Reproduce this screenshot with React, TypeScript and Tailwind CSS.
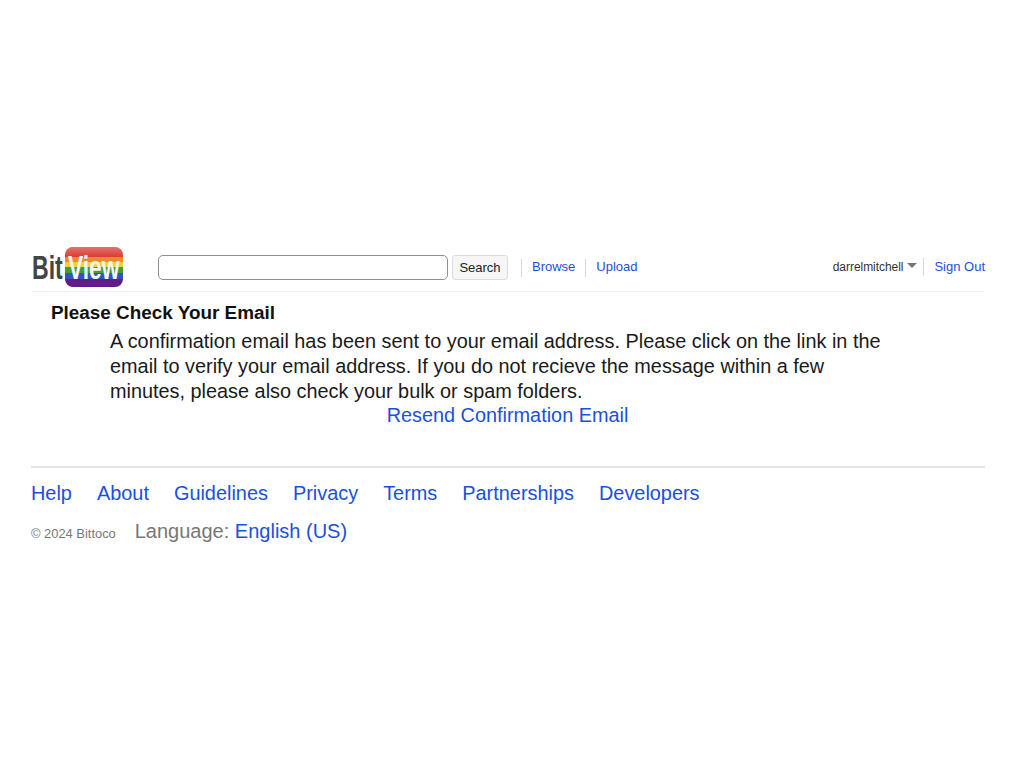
const font = { fontFamily: '"Liberation Sans", Arial, sans-serif' }

function Logo() {
  return (
    <svg width="93" height="42" viewBox="0 0 93 42" className="block shrink-0">
      <defs>
        <clipPath id="logo-clip">
          <rect x="34" y="1" width="58" height="40" rx="8" />
        </clipPath>
        <linearGradient id="logo-gloss" x1="0" y1="0" x2="0" y2="1">
          <stop offset="0" stopColor="#ffffff" stopOpacity="0.3" />
          <stop offset="1" stopColor="#ffffff" stopOpacity="0" />
        </linearGradient>
      </defs>
      <text transform="translate(1 33) scale(0.7 1)" fontFamily="Liberation Sans" fontWeight="700" fontSize="33" fill="#444444">Bit</text>
      <g clipPath="url(#logo-clip)">
        <rect x="34" y="1" width="58" height="10" fill="#d9362f" />
        <rect x="34" y="11" width="58" height="5" fill="#ee8a2c" />
        <rect x="34" y="16" width="58" height="5" fill="#f2d02f" />
        <rect x="34" y="21" width="58" height="6" fill="#3f9d3c" />
        <rect x="34" y="27" width="58" height="6" fill="#2f55b5" />
        <rect x="34" y="33" width="58" height="8" fill="#621b8c" />
        <rect x="34" y="1" width="58" height="11" fill="url(#logo-gloss)" />
      </g>
      <text transform="translate(37 33) scale(0.69 1)" fontFamily="Liberation Sans" fontWeight="700" fontSize="33" fill="#f4f4f4">View</text>
    </svg>
  )
}

const FOOTER_LINKS = ['Help', 'About', 'Guidelines', 'Privacy', 'Terms', 'Partnerships', 'Developers']

export default function App() {
  return (
    <div className="w-[1020px] h-[765px] bg-white pt-[246px] pl-[31px] pr-[35px]" style={font}>
      {/* Header */}
      <div className="h-[46px] flex items-start border-b border-[#f0f0f0]">
        <Logo />
        <div className="ml-[34px] mt-[9px] flex items-center">
          <input className="w-[290px] h-[25px] rounded-[5px] border border-[#8f8f8f] bg-white" />
          <button className="ml-[4px] w-[56px] h-[25px] rounded-[3px] border border-[#dcdcdc] bg-[#f6f6f6] text-[13px] text-[#222222]">Search</button>
          <div className="ml-[13px] h-[18px] border-l border-[#d8d8d8]" />
          <a className="ml-[10px] mb-[2px] text-[13px] text-[#1a50e0]">Browse</a>
          <div className="ml-[10px] h-[18px] border-l border-[#d8d8d8]" />
          <a className="ml-[10px] mb-[2px] text-[13px] text-[#1a50e0]">Upload</a>
        </div>
        <div className="ml-auto mt-[8px] h-[25px] flex items-center">
          <span className="text-[12px] tracking-[-0.05px] text-[#333333]">darrelmitchell</span>
          <span className="ml-[4px] mb-[2px] w-0 h-0 border-x-[5px] border-x-transparent border-t-[5px] border-t-[#777777]" />
          <div className="ml-[6px] h-[18px] border-l border-[#d8d8d8]" />
          <a className="ml-[10px] text-[13px] text-[#1a50e0]">Sign Out</a>
        </div>
      </div>

      {/* Message */}
      <div className="pl-[20px] pt-[10px]">
        <h1 className="text-[18.9px] leading-[22px] font-bold text-[#111111]">Please Check Your Email</h1>
        <div className="ml-[59px] w-[795px] mt-[5px] text-[19.87px] leading-[25px] text-[#1a1a1a]">
          <p className="w-[780px]">A confirmation email has been sent to your email address. Please click on the link in the email to verify your email address. If you do not recieve the message within a few minutes, please also check your bulk or spam folders.</p>
          <a className="block -mt-px text-center text-[#1a50e0]">Resend Confirmation Email</a>
        </div>
      </div>

      {/* Footer */}
      <div className="mt-[38px] border-t-2 border-[#e4e4e4] pt-[13px]">
        <div className="flex gap-[25px] text-[19.9px] leading-[25px] text-[#1a50e0]">
          {FOOTER_LINKS.map((l) => <a key={l}>{l}</a>)}
        </div>
        <div className="mt-[13px] flex items-baseline">
          <span className="text-[12.9px] text-[#777777]">© 2024 Bittoco</span>
          <span className="ml-[19px] text-[20px] leading-[25px] text-[#777777]">Language: <a className="text-[#1a50e0]">English (US)</a></span>
        </div>
      </div>
    </div>
  )
}
